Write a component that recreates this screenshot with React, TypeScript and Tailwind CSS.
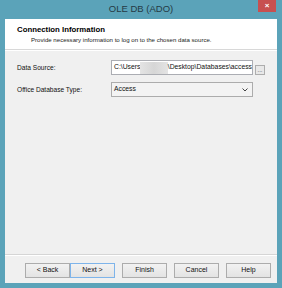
import * as React from "react";

const font = { fontFamily: '"Liberation Sans", Arial, sans-serif' };

function WinButton({ label, focused }: { label: string; focused?: boolean }) {
  return (
    <button
      className={`h-[15px] w-[45px] text-[7px] text-[#111] flex items-center justify-center bg-gradient-to-b from-[#f2f2f2] to-[#e3e3e3] border ${
        focused ? "border-[#7eb4ea]" : "border-[#acacac]"
      }`}
    >
      {label}
    </button>
  );
}

export default function App() {
  return (
    <div
      className="w-[282px] h-[288px] bg-[#5ba3b9] flex flex-col px-[5px] pb-[5px]"
      style={font}
    >
      {/* title bar */}
      <div className="relative h-[19px] flex items-center justify-center">
        <span className="text-[9.5px] text-[#253a45]">OLE DB (ADO)</span>
        <div className="absolute right-[1px] top-0 w-[18px] h-[12px] bg-[#c75050] flex items-center justify-center">
          <span className="text-white text-[8px] font-bold leading-none">×</span>
        </div>
      </div>

      <div className="flex-1 bg-[#f0f0f0] flex flex-col">
        {/* header */}
        <div className="h-[31px] bg-white border-b border-[#d8d8d8] pl-[12px] pt-[6px]">
          <div className="text-[7.8px] font-bold text-black leading-[10px]">Connection Information</div>
          <div className="text-[6.1px] text-[#222] leading-[9px] pl-[14px]">
            Provide necessary information to log on to the chosen data source.
          </div>
        </div>
        <div className="h-px bg-white" />

        {/* body */}
        <div className="flex-1 pl-[12px] pt-[9px] flex flex-col gap-[7px]">
          <div className="flex items-center">
            <span className="w-[94px] text-[6.6px] text-[#111]">Data Source:</span>
            <div className="w-[142px] h-[15px] bg-white border border-[#abadb3] flex items-center overflow-hidden pl-[2px] text-[6.8px] text-[#111] whitespace-nowrap">
              <span>C:\Users</span>
              <span className="inline-block w-[29px] h-[12px] bg-gradient-to-r from-[#e4e4e4] via-[#d6d6d6] to-[#e4e4e4]" />
              <span>\Desktop\Databases\access</span>
            </div>
            <div className="ml-[2px] mt-[4px] w-[10px] h-[10px] border border-[#adadad] bg-[#e8e8e8] text-[6px] leading-[8px] text-[#333] text-center">
              ...
            </div>
          </div>
          <div className="flex items-center">
            <span className="w-[94px] text-[6.6px] text-[#111]">Office Database Type:</span>
            <div className="w-[142px] h-[15px] bg-[#f3f3f3] border border-[#acacac] flex items-center justify-between pl-[2px] pr-[4px] text-[6.8px] text-[#111]">
              <span>Access</span>
              <svg width="6" height="4" viewBox="0 0 6 4">
                <path d="M0.5 0.5 L3 3 L5.5 0.5" fill="none" stroke="#444" strokeWidth="1" />
              </svg>
            </div>
          </div>
        </div>

        {/* footer */}
        <div className="h-px bg-[#d5d5d5]" />
        <div className="h-px bg-white" />
        <div className="h-[27px] flex items-start pt-[7px] pl-[20px]">
          <WinButton label="< Back" />
          <WinButton label="Next >" focused />
          <div className="ml-[7px] flex gap-[7px]">
            <WinButton label="Finish" />
            <WinButton label="Cancel" />
            <WinButton label="Help" />
          </div>
        </div>
      </div>
    </div>
  );
}
